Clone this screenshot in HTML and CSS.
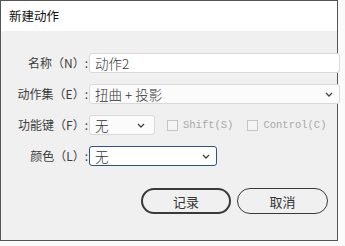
FILE: index.html
```html
<!DOCTYPE html>
<html lang="zh-CN">
<head>
    <meta charset="UTF-8">
    <title>新建动作</title>
    <link rel="stylesheet" href="styles.css">
</head>
<body>

<div class="dialog">
    <div class="titlebar">新建动作</div>

    <div class="content">
        <div class="form">
            <label class="lbl">名称（N）:</label>
            <div class="field text">动作2</div>

            <label class="lbl">动作集（E）:</label>
            <div class="field select">扭曲&nbsp;+&nbsp;投影
                <svg class="chev" width="8" height="5" viewBox="0 0 8 5"><path d="M1 1 L4 4 L7 1" fill="none" stroke="#444" stroke-width="1.3"/></svg>
            </div>

            <label class="lbl">功能键（F）:</label>
            <div class="row">
                <div class="field select short">无
                    <svg class="chev" width="8" height="5" viewBox="0 0 8 5"><path d="M1 1 L4 4 L7 1" fill="none" stroke="#444" stroke-width="1.3"/></svg>
                </div>
                <span class="check"><span class="box"></span>Shift(S)</span>
                <span class="check"><span class="box"></span>Control(C)</span>
            </div>

            <label class="lbl">颜色（L）:</label>
            <div class="row">
                <div class="field select color focus">无
                    <svg class="chev" width="8" height="5" viewBox="0 0 8 5"><path d="M1 1 L4 4 L7 1" fill="none" stroke="#444" stroke-width="1.3"/></svg>
                </div>
            </div>
        </div>

        <div class="actions">
            <button class="btn primary">记录</button>
            <button class="btn">取消</button>
        </div>
    </div>
</div>

</body>
</html>
```

FILE: styles.css
```css
body {
    margin: 0;
    background-color: #fafafa;
    font-family: "Noto Sans CJK SC", sans-serif;
    font-size: 12px;
    color: #333;
}
.dialog {
    width: 338px;
    height: 241px;
    box-sizing: border-box;
    border: 1px solid #555;
    background-color: #f0f0f0;
}
.titlebar {
    height: 30px;
    line-height: 30px;
    padding-left: 8px;
    background-color: #fff;
    font-size: 12.5px;
    color: #111;
}
.content {
    padding: 22px 9px 0 0;
}
.form {
    display: grid;
    grid-template-columns: 87px 1fr;
    column-gap: 1px;
    row-gap: 11px;
}
.lbl {
    height: 20px;
    line-height: 20px;
    text-align: right;
    color: #3c3c3c;
}
.field {
    height: 20px;
    line-height: 18px;
    box-sizing: border-box;
    border: 1px solid #d9d9d9;
    border-radius: 3px;
    padding-left: 5px;
    background-color: #fff;
    font-size: 13.5px;
    font-weight: 300;
    color: #333;
    position: relative;
}
.select {
    background-color: #fbfbfb;
}
.chev {
    position: absolute;
    right: 6px;
    top: 7px;
}
.row {
    display: flex;
    align-items: center;
}
.short {
    width: 66px;
    margin-right: 12px;
}
.short .chev {
    right: 9px;
}
.color {
    width: 128px;
}
.focus {
    border-color: #2b5580;
    background-color: #fff;
}
.check {
    display: flex;
    align-items: center;
    font-family: "Liberation Mono", monospace;
    font-size: 10.5px;
    color: #a8a8a8;
    margin-right: 14px;
}
.box {
    width: 11px;
    height: 11px;
    box-sizing: border-box;
    border: 1px solid #c4c4c4;
    background-color: #f4f4f4;
    margin-right: 5px;
}
.actions {
    display: flex;
    justify-content: flex-end;
    gap: 6px;
    margin-top: 22px;
}
.btn {
    width: 91px;
    height: 26px;
    box-sizing: border-box;
    border: 1px solid #3a3a3a;
    border-radius: 13px;
    background-color: #f0f0f0;
    font-family: "Noto Sans CJK SC", sans-serif;
    font-size: 13px;
    color: #333;
    padding: 0;
}
.primary {
    width: 90px;
    border-width: 2px;
}
```
